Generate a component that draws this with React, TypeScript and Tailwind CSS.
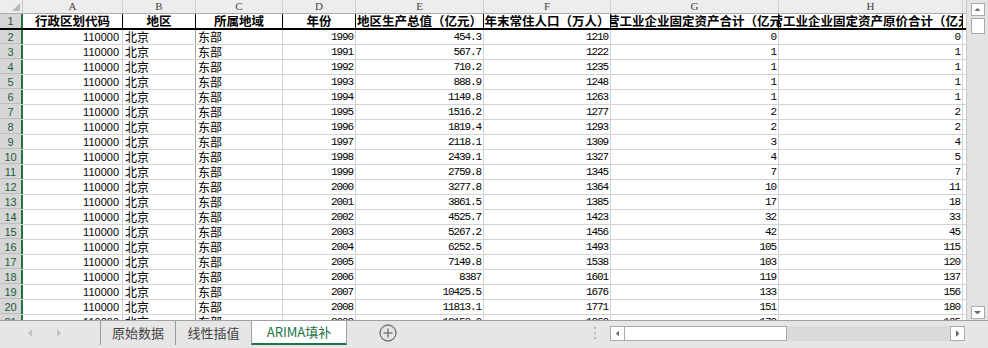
import React from 'react';

const cols = [
  { letter: 'A', w: 'w-[100px]' },
  { letter: 'B', w: 'w-[73px]' },
  { letter: 'C', w: 'w-[87px]' },
  { letter: 'D', w: 'w-[73px]' },
  { letter: 'E', w: 'w-[128px]' },
  { letter: 'F', w: 'w-[127px]' },
  { letter: 'G', w: 'w-[168px]' },
  { letter: 'H', w: 'w-[184px]' },
];

const headers = [
  '行政区划代码',
  '地区',
  '所属地域',
  '年份',
  '地区生产总值（亿元）',
  '年末常住人口（万人）',
  '民营工业企业固定资产合计（亿元）',
  '民营工业企业固定资产原价合计（亿元）',
];

const gdp = ['454.3', '567.7', '710.2', '888.9', '1149.8', '1516.2', '1819.4', '2118.1', '2439.1', '2759.8', '3277.8', '3861.5', '4525.7', '5267.2', '6252.5', '7149.8', '8387', '10425.5', '11813.1', '12153.0'];
const pop = [1210, 1222, 1235, 1248, 1263, 1277, 1293, 1309, 1327, 1345, 1364, 1385, 1423, 1456, 1493, 1538, 1601, 1676, 1771, 1860];
const fixed = [0, 1, 1, 1, 1, 2, 2, 3, 4, 7, 10, 17, 32, 42, 105, 103, 119, 133, 151, 170];
const orig = [0, 1, 1, 1, 1, 2, 2, 4, 5, 7, 11, 18, 33, 45, 115, 120, 137, 156, 180, 195];

const rows = gdp.map((g, i) => [
  '110000',
  '北京',
  '东部',
  String(1990 + i),
  g,
  String(pop[i]),
  String(fixed[i]),
  String(orig[i]),
]);

const cjk = "font-['Noto_Sans_CJK_SC',sans-serif]";
const mono = "font-['Liberation_Mono',monospace] text-[11px] tracking-[-1.1px] justify-end pr-[2px]";

const cellStyle = [
  "font-['Liberation_Sans',sans-serif] text-[11px] justify-end pr-[3px]",
  `${cjk} text-[12px] pl-[2px]`,
  `${cjk} text-[12px] pl-[2px]`,
  mono,
  mono,
  mono,
  mono,
  mono,
];

const borderStyle = [
  'border-[#d4d4d4]',
  'border-[#a6a6a6]',
  'border-[#d4d4d4]',
  'border-[#d4d4d4]',
  'border-[#d4d4d4]',
  'border-[#d4d4d4]',
  'border-[#d4d4d4]',
  'border-[#d4d4d4]',
];

const Tri = ({ dir, color, size = 5 }: { dir: 'l' | 'r' | 'u' | 'd'; color: string; size?: number }) => {
  const pts = {
    l: '4,0 4,8 0,4',
    r: '0,0 0,8 4,4',
    u: '0,4 8,4 4,0',
    d: '0,0 8,0 4,4',
  }[dir];
  const vw = dir === 'l' || dir === 'r' ? '0 0 4 8' : '0 0 8 4';
  const w = dir === 'l' || dir === 'r' ? size * 0.5 : size;
  const h = dir === 'l' || dir === 'r' ? size : size * 0.5;
  return (
    <svg width={w} height={h} viewBox={vw}>
      <polygon points={pts} fill={color} />
    </svg>
  );
};

const Grid = () => (
  <div className="w-[967px] h-[320px] overflow-hidden border-r border-[#c6c6c6] bg-white">
    {/* column letters */}
    <div className="flex h-[14px] bg-[#ededed] border-b border-[#ababab]">
      <div className="w-[23px] h-full border-r border-[#c8c8c8] relative">
        <svg className="absolute right-[2px] bottom-[2px]" width="8" height="8" viewBox="0 0 8 8">
          <polygon points="8,0 8,8 0,8" fill="#b8b8b8" />
        </svg>
      </div>
      {cols.map((c) => (
        <div
          key={c.letter}
          className={`${c.w} h-full border-r border-[#d0d0d0] flex items-center justify-center font-['Liberation_Serif',serif] text-[11px] leading-[13px] text-[#444]`}
        >
          {c.letter}
        </div>
      ))}
    </div>

    {/* header row */}
    <div className="flex h-[16px] border-b-2 border-black">
      <div className="w-[23px] h-full bg-[#d6d6d6] border-r-2 border-[#217346] flex items-center justify-center font-['Liberation_Sans',sans-serif] text-[11px] leading-[14px] text-[#1e5c3a]">
        1
      </div>
      {cols.map((c, i) => (
        <div
          key={c.letter}
          className={`${c.w} h-full border-r border-black flex items-center justify-center overflow-hidden ${cjk} text-[12.5px] font-bold leading-[14px] text-black`}
        >
          <span className="whitespace-nowrap shrink-0">{headers[i]}</span>
        </div>
      ))}
    </div>

    {/* data rows */}
    {rows.map((r, ri) => (
      <div key={ri} className="flex h-[15px] border-b border-[#d4d4d4]">
        <div className="w-[23px] h-full bg-[#d6d6d6] border-r-2 border-[#217346] flex items-center justify-center font-['Liberation_Sans',sans-serif] text-[11px] leading-[14px] text-[#1e5c3a] shadow-[inset_0_-1px_0_#bdbdbd]">
          {ri + 2}
        </div>
        {r.map((v, ci) => (
          <div
            key={ci}
            className={`${cols[ci].w} h-full border-r ${borderStyle[ci]} flex items-center overflow-hidden leading-[14px] text-black ${cellStyle[ci]}`}
          >
            <span className="whitespace-nowrap">{v}</span>
          </div>
        ))}
      </div>
    ))}
  </div>
);

const VScroll = () => (
  <div className="w-[21px] h-[320px] bg-[#e3e3e3] flex flex-col items-center pt-[3px] pb-[1px]">
    <div className="w-[14px] h-[13px] bg-white border border-[#ababab] flex items-center justify-center">
      <Tri dir="u" color="#6b6b6b" size={7} />
    </div>
    <div className="w-[14px] h-[16px] mt-[2px] bg-white border border-[#ababab]" />
    <div className="flex-1" />
    <div className="w-[14px] h-[13px] bg-white border border-[#ababab] flex items-center justify-center">
      <Tri dir="d" color="#6b6b6b" size={7} />
    </div>
  </div>
);

const TabBar = () => (
  <div className="flex h-[28px] bg-[#e6e6e6] border-t border-[#a0a0a0] pb-[3px]">
    <div className="w-[100px] flex items-center">
      <div className="ml-[28px]">
        <Tri dir="l" color="#c2c2c2" size={8} />
      </div>
      <div className="ml-[25px]">
        <Tri dir="r" color="#c2c2c2" size={8} />
      </div>
    </div>
    <div className={`w-[76px] border-l border-r border-[#9a9a9a] flex items-center justify-center ${cjk} text-[13px] leading-[18px] text-[#444]`}>
      原始数据
    </div>
    <div className={`w-[75px] flex items-center justify-center ${cjk} text-[13px] leading-[18px] text-[#444]`}>
      线性插值
    </div>
    <div className={`w-[96px] bg-white border-x border-[#a0a0a0] border-b-2 border-b-[#217346] flex items-center justify-center ${cjk} text-[13px] leading-[18px] text-[#217346]`}>
      ARIMA填补
    </div>
    <div className="ml-[32px] flex items-center">
      <svg width="18" height="18" viewBox="0 0 18 18">
        <circle cx="9" cy="9" r="8" fill="none" stroke="#747474" strokeWidth="1.3" />
        <line x1="9" y1="4.5" x2="9" y2="13.5" stroke="#747474" strokeWidth="1.4" />
        <line x1="4.5" y1="9" x2="13.5" y2="9" stroke="#747474" strokeWidth="1.4" />
      </svg>
    </div>
    <div className="ml-auto w-[2px] flex flex-col justify-center gap-[3px]">
      <div className="h-[2px] bg-[#b8b8b8]" />
      <div className="h-[2px] bg-[#b8b8b8]" />
      <div className="h-[2px] bg-[#b8b8b8]" />
    </div>
    <div className="ml-[14px] w-[355px] flex items-center">
      <div className="flex w-full h-[15px]">
        <div className="w-[15px] h-full bg-white border border-[#ababab] flex items-center justify-center">
          <Tri dir="l" color="#6b6b6b" size={7} />
        </div>
        <div className="w-[162px] h-full bg-white border-y border-r border-[#ababab]" />
        <div className="flex-1 h-full bg-[#dadada]" />
        <div className="w-[15px] h-full bg-white border border-[#ababab] flex items-center justify-center">
          <Tri dir="r" color="#6b6b6b" size={7} />
        </div>
      </div>
    </div>
    <div className="w-[23px]" />
  </div>
);

export default function App() {
  return (
    <div className="w-[988px] h-[348px] overflow-hidden bg-white flex flex-col">
      <div className="flex h-[320px]">
        <Grid />
        <VScroll />
      </div>
      <TabBar />
    </div>
  );
}
